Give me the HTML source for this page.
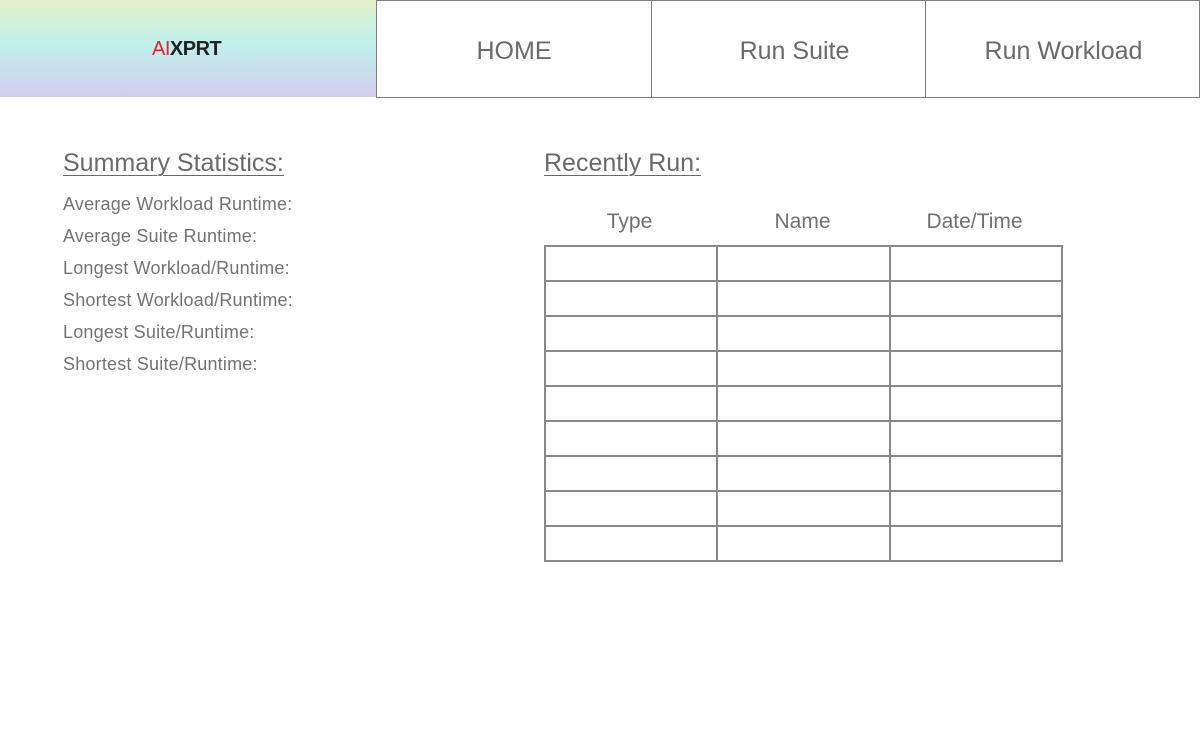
<!DOCTYPE html>
<html><head><style>
body{margin:0;width:1200px;height:750px;background:#fff;font-family:"Liberation Sans",sans-serif;color:#707070;position:relative;overflow:hidden}
.hdr{position:absolute;left:0;top:0;width:376px;height:97px;background:linear-gradient(#e4f0c8 0%,#c0f0ec 45%,#c8e0ec 70%,#d4cceb 100%)}
.logo{position:absolute;left:152px;top:38px;font-size:20px;font-weight:bold;letter-spacing:-0.5px;color:#222}
.logo span{color:#e8202a;font-weight:normal}
.nav{position:absolute;top:0;border:1px solid #808080;box-sizing:border-box;height:98px;display:flex;align-items:center;justify-content:center;font-size:25px;color:#6a6a6a;padding-top:5px}
h2{position:absolute;margin:0;font-size:25px;font-weight:normal;text-decoration:underline;text-underline-offset:4px;text-decoration-thickness:1px;color:#6a6a6a}
.s{position:absolute;left:63px;font-size:18px;color:#737373;letter-spacing:0.2px}
.th{position:absolute;top:210px;font-size:21px;width:173px;text-align:center;color:#707070}
table{position:absolute;left:544px;top:245px;border-collapse:collapse;table-layout:fixed;width:519px}
td{height:33px;border:2px solid #888;padding:0}
</style></head><body>
<div class="hdr"><div class="logo"><span>AI</span>XPRT</div></div>
<div class="nav" style="left:376px;width:276px">HOME</div>
<div class="nav" style="left:651px;width:275px;padding-left:12px">Run Suite</div>
<div class="nav" style="left:925px;width:275px;padding-left:2px">Run Workload</div>
<h2 style="left:63px;top:149px">Summary Statistics:</h2>
<h2 style="left:544px;top:149px">Recently Run:</h2>
<div class="s" style="top:194px">Average Workload Runtime:</div>
<div class="s" style="top:226px">Average Suite Runtime:</div>
<div class="s" style="top:258px">Longest Workload/Runtime:</div>
<div class="s" style="top:290px">Shortest Workload/Runtime:</div>
<div class="s" style="top:322px">Longest Suite/Runtime:</div>
<div class="s" style="top:354px">Shortest Suite/Runtime:</div>
<div class="th" style="left:543px">Type</div>
<div class="th" style="left:716px">Name</div>
<div class="th" style="left:888px">Date/Time</div>
<table>
<tr><td></td><td></td><td></td></tr>
<tr><td></td><td></td><td></td></tr>
<tr><td></td><td></td><td></td></tr>
<tr><td></td><td></td><td></td></tr>
<tr><td></td><td></td><td></td></tr>
<tr><td></td><td></td><td></td></tr>
<tr><td></td><td></td><td></td></tr>
<tr><td></td><td></td><td></td></tr>
<tr><td></td><td></td><td></td></tr>
</table>
</body></html>
